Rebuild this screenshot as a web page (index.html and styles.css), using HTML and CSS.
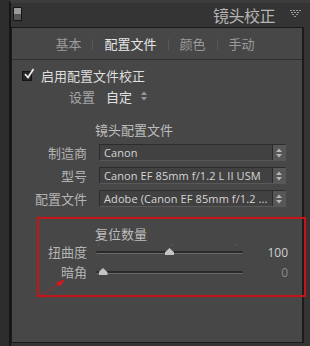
FILE: index.html
```html
<!DOCTYPE html>
<html lang="zh-CN">
<head>
<meta charset="utf-8">
<link rel="stylesheet" href="styles.css">
</head>
<body>
<div class="app">
  <div class="frame">
    <div class="header">
      <span class="toggle"></span>
      <span class="title">镜头校正</span>
      <svg class="tri" width="11" height="8" viewBox="0 0 11 8">
        <g fill="#9a9a9a">
          <rect x="0" y="0" width="2" height="1"/><rect x="3" y="0" width="2" height="1"/><rect x="6" y="0" width="2" height="1"/><rect x="9" y="0" width="2" height="1"/>
          <rect x="1" y="2" width="2" height="1"/><rect x="4" y="2" width="2" height="1"/><rect x="7" y="2" width="2" height="1"/>
          <rect x="2" y="4" width="2" height="1"/><rect x="6" y="4" width="2" height="1"/>
          <rect x="4" y="6" width="2" height="1"/>
        </g>
      </svg>
    </div>
    <div class="panel">
      <div class="tabs">
        <span class="tab">基本</span>
        <span class="sep"></span>
        <span class="tab active">配置文件</span>
        <span class="sep"></span>
        <span class="tab">颜色</span>
        <span class="sep"></span>
        <span class="tab">手动</span>
      </div>
      <div class="content">
        <div class="check-row">
          <span class="checkbox">
            <svg width="12" height="12" viewBox="0 0 12 12"><path d="M2 6 L5 9.5 L10.5 1" fill="none" stroke="#e8e8e8" stroke-width="1.8"/></svg>
          </span>
          <span class="check-label">启用配置文件校正</span>
        </div>
        <div class="setting-row">
          <span class="setting-label">设置</span>
          <span class="setting-value">自定</span>
          <svg class="updown" width="6" height="10" viewBox="0 0 6 10"><path d="M0 4 L3 0.5 L6 4 Z M0 6 L3 9.5 L6 6 Z" fill="#9a9a9a"/></svg>
        </div>

        <div class="section-title">镜头配置文件</div>
        <div class="field-row">
          <span class="label">制造商</span>
          <span class="select"><span class="select-text">Canon</span><span class="stepper"><svg width="6" height="10" viewBox="0 0 6 10"><path d="M0 4 L3 0.5 L6 4 Z M0 6 L3 9.5 L6 6 Z" fill="#b5b5b5"/></svg></span></span>
        </div>
        <div class="field-row">
          <span class="label">型号</span>
          <span class="select"><span class="select-text">Canon EF 85mm f/1.2 L II USM</span><span class="stepper"><svg width="6" height="10" viewBox="0 0 6 10"><path d="M0 4 L3 0.5 L6 4 Z M0 6 L3 9.5 L6 6 Z" fill="#b5b5b5"/></svg></span></span>
        </div>
        <div class="field-row">
          <span class="label">配置文件</span>
          <span class="select"><span class="select-text">Adobe (Canon EF 85mm f/1.2 ...</span><span class="stepper"><svg width="6" height="10" viewBox="0 0 6 10"><path d="M0 4 L3 0.5 L6 4 Z M0 6 L3 9.5 L6 6 Z" fill="#b5b5b5"/></svg></span></span>
        </div>

        <div class="section-title reset">复位数量</div>
        <div class="slider-row">
          <span class="label">扭曲度</span>
          <span class="slider">
            <span class="ticks"><i></i><i></i><i></i></span>
            <span class="groove"></span>
            <span class="thumb-track"><span class="thumb" style="left: 50%"></span></span>
          </span>
          <span class="value">100</span>
        </div>
        <div class="slider-row second">
          <span class="label">暗角</span>
          <span class="slider">
            <span class="groove"></span>
            <span class="thumb-track"><span class="thumb" style="left: 0%"></span></span>
          </span>
          <span class="value dim">0</span>
        </div>
      </div>
    </div>
  </div>
  <div class="highlight"></div>
  <svg class="arrow" width="40" height="30" viewBox="0 0 40 30">
    <path d="M3 26 L22 13" stroke="#c81a1e" stroke-width="1" fill="none" opacity="0.7"/>
    <path d="M18 13 L27 9 L22 16.5 Z" fill="#e0141a"/>
  </svg>
</div>
</body>
</html>
```

FILE: styles.css
```css
* { box-sizing: border-box; }
html, body { margin: 0; padding: 0; }
body {
  background: #2d2d2d;
  font-family: "Noto Sans CJK SC", "Noto Sans", sans-serif;
  font-size: 13px;
}
.app {
  position: relative;
  width: 310px;
  height: 346px;
  background: #2d2d2d;
  padding-left: 9px;
  overflow: hidden;
}
.frame {
  height: 346px;
  border-left: 2px solid #151515;
  background: #343434;
  border-top: 3px solid #3c3c3c;
  display: flex;
  flex-direction: column;
}
.header {
  height: 24px;
  display: flex;
  align-items: center;
  padding-left: 2px;
  padding-right: 9px;
}
.toggle {
  width: 9px;
  height: 14px;
  border: 1px solid #161616;
  background: linear-gradient(#9a9a9a 0 50%, #555 50% 100%);
  margin-top: -2px;
}
.title {
  margin-left: auto;
  color: #b5b5b5;
  font-size: 16px;
  line-height: 20px;
  letter-spacing: -0.5px;
}
.tri { margin-left: 15px; margin-top: -2px; }
.panel {
  flex: 1;
  margin-right: 6px;
  margin-bottom: 3px;
  border: 1px solid #1b1b1b;
  border-right-width: 2px;
  background: #474747;
  display: flex;
  flex-direction: column;
}
.tabs {
  height: 32px;
  display: flex;
  align-items: center;
  justify-content: center;
  padding-right: 4px;
  padding-top: 1px;
  border-bottom: 1px solid #2f2f2f;
  gap: 11px;
}
.tab { color: #9a9a9a; font-size: 13px; line-height: 16px; }
.tab.active { color: #e6e6e6; }
.sep { width: 1px; height: 11px; background: #575757; }
.content {
  display: flex;
  flex-direction: column;
  padding-left: 10px;
}
.check-row {
  display: flex;
  align-items: center;
  margin-top: 8px;
  height: 16px;
}
.checkbox {
  width: 10px;
  height: 10px;
  background: #262626;
  border: 1px solid #151515;
  position: relative;
}
.checkbox svg { position: absolute; left: 0; top: -4px; }
.check-label { margin-left: 9px; color: #dedede; line-height: 16px; }
.setting-row {
  display: flex;
  align-items: center;
  margin-top: 4px;
  height: 16px;
  padding-left: 47px;
}
.setting-label { color: #a8a8a8; }
.setting-value { color: #e0e0e0; margin-left: 11px; }
.updown { margin-left: 9px; }
.section-title {
  color: #bdbdbd;
  margin-top: 18px;
  padding-left: 73px;
  line-height: 16px;
}
.section-title.reset { margin-top: 19px; }
.field-row {
  display: flex;
  align-items: center;
  margin-top: 6px;
  height: 17px;
}
.label {
  width: 65px;
  text-align: right;
  color: #b4b4b4;
  line-height: 16px;
  flex: none;
}
.select {
  margin-left: 12px;
  width: 187px;
  height: 17px;
  display: flex;
  border: 1px solid #2c2c2c;
  border-bottom-color: #585858;
  border-right-color: #575757;
  background: #414141;
}
.select-text {
  flex: 1;
  min-width: 0;
  padding-left: 4px;
  color: #d6d6d6;
  font-family: "Open Sans", "Noto Sans", sans-serif;
  font-size: 11px;
  line-height: 15px;
  white-space: nowrap;
  overflow: hidden;
  letter-spacing: 0.1px;
}
.stepper {
  width: 13px;
  flex: none;
  border-left: 1px solid #2a2a2a;
  background: #575757;
  display: flex;
  align-items: center;
  justify-content: center;
}
.slider-row {
  display: flex;
  align-items: center;
  height: 18px;
  margin-top: 1px;
}
.slider-row.second { margin-top: 2px; }
.slider {
  position: relative;
  margin-left: 9px;
  width: 147px;
  height: 18px;
  display: flex;
  align-items: center;
}
.groove {
  width: 100%;
  height: 3px;
  border-radius: 2px;
  background: #2a2a2a;
  border-bottom: 1px solid #6a6a6a;
}
.ticks {
  position: absolute;
  top: 1px;
  left: 2px;
  right: 6px;
  display: flex;
  justify-content: space-between;
}
.ticks i { width: 1px; height: 2px; background: #5c5c5c; }
.ticks i:nth-child(2) { margin-left: 8px; }
.thumb-track {
  position: absolute;
  left: 7px;
  right: 7px;
  top: 0;
  height: 18px;
}
.thumb {
  position: absolute;
  top: 5px;
  width: 9px;
  height: 7px;
  margin-left: -4.5px;
  background: #c4c4c4;
  clip-path: polygon(50% 0, 100% 60%, 100% 100%, 0 100%, 0 60%);
}
.value {
  margin-left: auto;
  margin-right: 14px;
  color: #d0d0d0;
  font-family: "Open Sans", "Noto Sans", sans-serif;
  font-size: 12px;
}
.value.dim { color: #8a8a8a; }
.highlight {
  position: absolute;
  left: 37px;
  top: 217px;
  width: 269px;
  height: 80px;
  border: 2px solid #c0161c;
  box-shadow: 0 0 1px rgba(200, 20, 28, 0.6);
}
.arrow {
  position: absolute;
  left: 38px;
  top: 270px;
}
```
